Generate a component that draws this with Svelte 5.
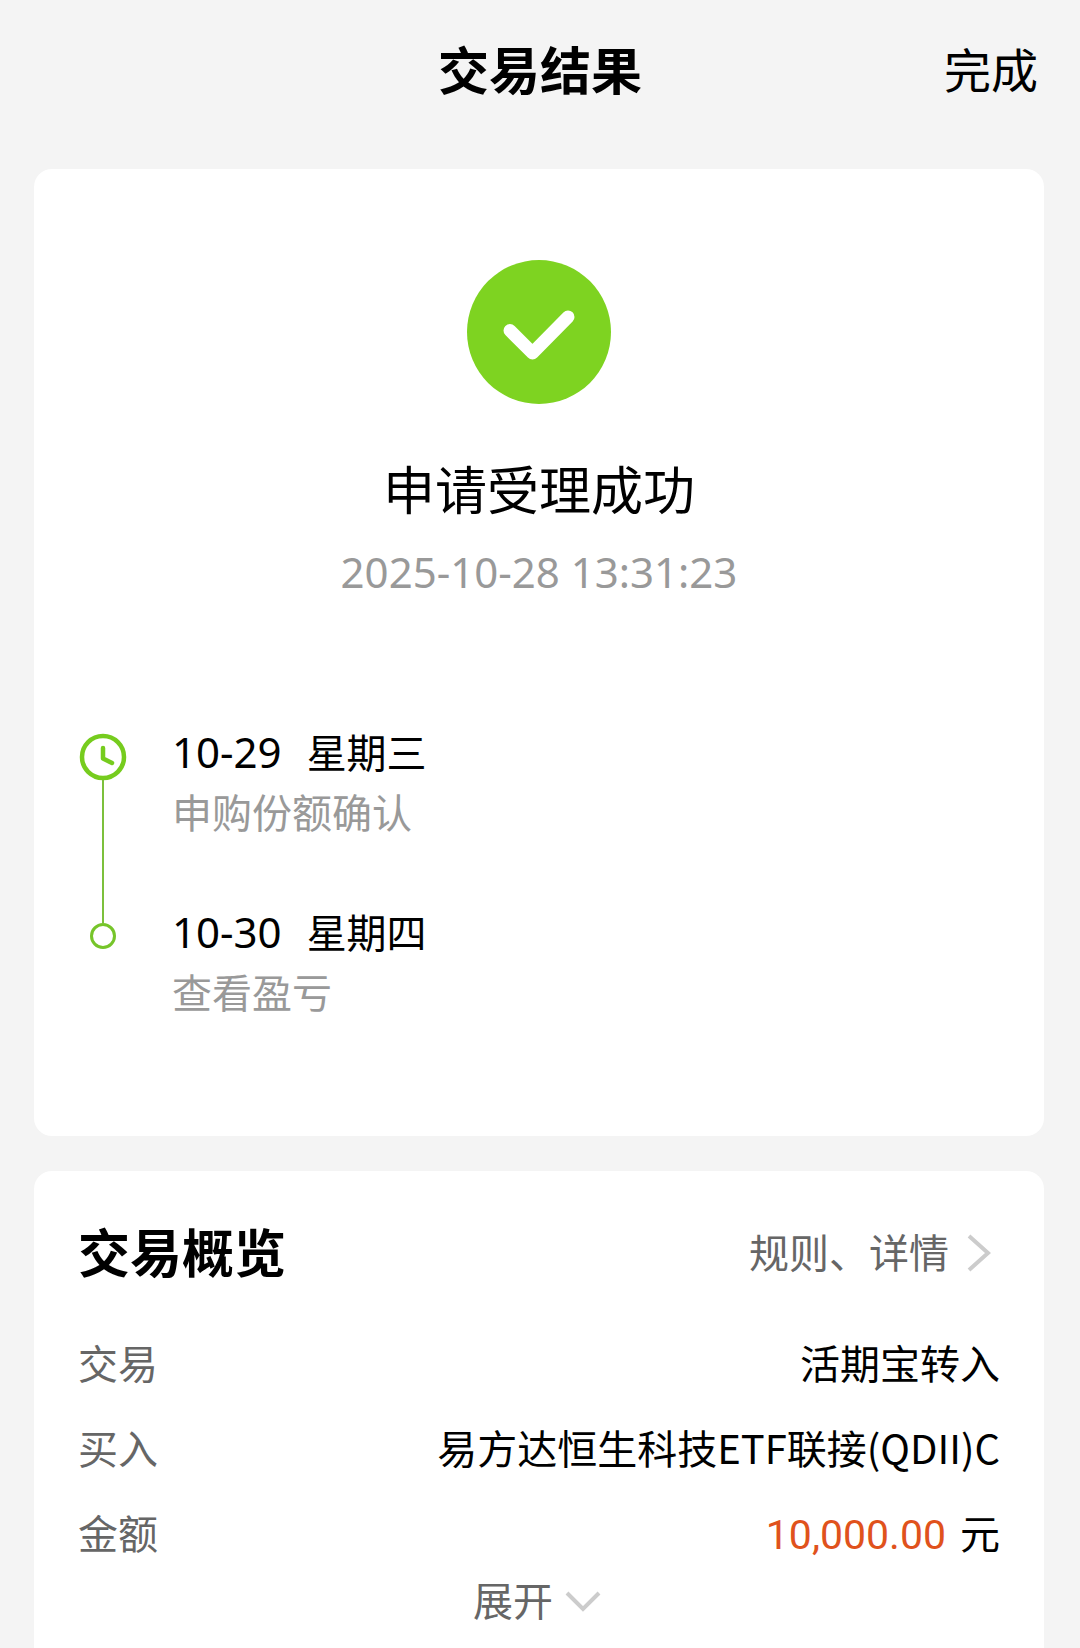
<script lang="ts">
  interface Step {
    date: string
    weekday: string
    label: string
  }

  interface Row {
    label: string
    value: string
    unit?: string
  }

  const steps: Step[] = [
    { date: '10-29', weekday: '星期三', label: '申购份额确认' },
    { date: '10-30', weekday: '星期四', label: '查看盈亏' },
  ]

  const rows: Row[] = [
    { label: '交易', value: '活期宝转入' },
    { label: '买入', value: '易方达恒生科技ETF联接(QDII)C' },
    { label: '金额', value: '10,000.00', unit: '元' },
  ]

  let expanded = $state(false)
</script>

<div class="page">
  <header class="topbar">
    <h1>交易结果</h1>
    <button type="button" class="done">完成</button>
  </header>

  <main>
    <section class="card result">
      <svg class="badge" viewBox="0 0 144 144" aria-hidden="true">
        <circle cx="72" cy="72" r="72" fill="#7ed321" />
        <path
          d="M43 70.500 L65.500 93 L101 57"
          fill="none"
          stroke="#fff"
          stroke-width="13"
          stroke-linecap="round"
          stroke-linejoin="round"
        />
      </svg>
      <h2 class="status">申请受理成功</h2>
      <time class="stamp" datetime="2025-10-28T13:31:23">2025-10-28 13:31:23</time>

      <ol class="timeline">
        {#each steps as step, i}
          <li>
            <div class="rail">
              {#if i === 0}
                <svg class="clock" viewBox="0 0 48 48" aria-hidden="true">
                  <g fill="none" stroke="#76cc1e" stroke-linecap="round" stroke-linejoin="round">
                    <circle cx="24" cy="24" r="21" stroke-width="4.500" />
                    <path d="M24 15 V25.500 L33 30" stroke-width="4.500" />
                  </g>
                </svg>
              {:else}
                <span class="dot"></span>
              {/if}
              {#if i < steps.length - 1}
                <span class="line"></span>
              {/if}
            </div>
            <div class="step">
              <p class="when"><span class="date">{step.date}</span><span>{step.weekday}</span></p>
              <p class="what">{step.label}</p>
            </div>
          </li>
        {/each}
      </ol>
    </section>

    <section class="card overview">
      <div class="overview-head">
        <h2>交易概览</h2>
        <a href="#rules">
          规则、详情
          <svg class="chev-right" viewBox="0 0 24 38" aria-hidden="true">
            <path d="M2 2 L21 19 L2 36" fill="none" stroke="#ccc" stroke-width="4" />
          </svg>
        </a>
      </div>

      <dl>
        {#each rows as row}
          <div class="row">
            <dt>{row.label}</dt>
            {#if row.unit}
              <dd><span class="amount">{row.value}</span><span>{row.unit}</span></dd>
            {:else}
              <dd>{row.value}</dd>
            {/if}
          </div>
        {/each}
      </dl>

      <button
        type="button"
        class="expand"
        aria-expanded={expanded}
        onclick={() => (expanded = !expanded)}
      >
        展开
        <svg class="chev-down" class:open={expanded} viewBox="0 0 36 22" aria-hidden="true">
          <path d="M2 3 L18 19 L34 3" fill="none" stroke="#ccc" stroke-width="4" />
        </svg>
      </button>
    </section>
  </main>
</div>

<style>
  :global(body) {
    background: #f4f4f4;
  }
  .page {
    box-sizing: border-box;
    min-height: 100vh;
    display: flex;
    flex-direction: column;
    font-family: 'Noto Sans CJK SC', sans-serif;
    font-size: 40px;
    line-height: 60px;
    color: #000;
  }
  h1,
  h2,
  p,
  ol,
  dl,
  dd {
    margin: 0;
    padding: 0;
  }
  button {
    padding: 0;
    border: none;
    background: none;
    font: inherit;
    color: inherit;
    cursor: pointer;
  }

  .topbar {
    display: grid;
    grid-template-columns: 1fr auto 1fr;
    align-items: center;
    height: 136px;
    margin-bottom: 33px;
    padding: 0 42px;
  }
  h1 {
    grid-column: 2;
    font-size: 51px;
    font-weight: 700;
  }
  .done {
    justify-self: end;
    font-size: 47px;
  }

  main {
    flex: 1;
    display: flex;
    flex-direction: column;
    gap: 35px;
    padding: 0 36px 0 34px;
  }
  .card {
    padding: 0 44px;
    border-radius: 18px;
    background: #fff;
  }

  .result {
    display: flex;
    flex-direction: column;
    align-items: center;
    padding-top: 91px;
    padding-bottom: 115px;
  }
  .badge {
    width: 144px;
    height: 144px;
  }
  .status {
    margin-top: 48px;
    font-size: 52px;
    font-weight: 400;
    line-height: 72px;
  }
  .stamp,
  .date {
    font-family: 'Noto Sans', sans-serif;
    font-size: 42px;
  }
  .stamp {
    margin-top: 18px;
    color: #999;
  }

  .timeline {
    align-self: stretch;
    margin-top: 119px;
    list-style: none;
  }
  .timeline li {
    display: flex;
    gap: 44px;
  }
  .timeline li:not(:last-child) .step {
    padding-bottom: 60px;
  }
  .rail {
    width: 50px;
    display: flex;
    flex-direction: column;
    align-items: center;
    padding-top: 12px;
  }
  .timeline li:last-child .rail {
    padding-top: 22px;
  }
  .clock {
    flex: none;
    width: 48px;
    height: 48px;
  }
  .line {
    flex: 1;
    width: 2px;
    margin-top: -1px;
    margin-bottom: -22px;
    background: #7cc03c;
  }
  .dot {
    box-sizing: border-box;
    width: 26px;
    height: 26px;
    border: 3px solid #76c52a;
    border-radius: 50%;
  }
  .when {
    display: flex;
    align-items: baseline;
    gap: 25px;
    height: 60px;
  }
  .what {
    color: #999;
  }

  .overview {
    flex: 1;
    padding-bottom: 18px;
    border-radius: 18px 18px 0 0;
  }
  .overview-head {
    display: flex;
    justify-content: space-between;
    align-items: center;
    padding-top: 44px;
  }
  .overview-head h2 {
    font-size: 52px;
    font-weight: 700;
    line-height: 72px;
  }
  .overview-head a {
    display: flex;
    align-items: center;
    gap: 18px;
    margin-right: 9px;
    color: #666;
    text-decoration: none;
  }
  .chev-right,
  .chev-down {
    margin-top: 4px;
  }
  .chev-right {
    width: 24px;
    height: 38px;
  }
  dl {
    display: flex;
    flex-direction: column;
    gap: 25px;
    margin-top: 45px;
  }
  .row {
    display: flex;
    justify-content: space-between;
    height: 60px;
  }
  dt {
    color: #666;
  }
  dd {
    display: flex;
    align-items: baseline;
    gap: 14px;
    text-align: right;
  }
  .amount {
    font-family: Roboto, sans-serif;
    font-size: 41px;
    color: #e0521c;
  }
  .expand {
    display: flex;
    align-items: center;
    gap: 12px;
    margin: 7px auto 0;
    padding-right: 4px;
    color: #666;
  }
  .chev-down {
    width: 36px;
    height: 22px;
  }
  .chev-down.open {
    transform: rotate(180deg);
  }
</style>
